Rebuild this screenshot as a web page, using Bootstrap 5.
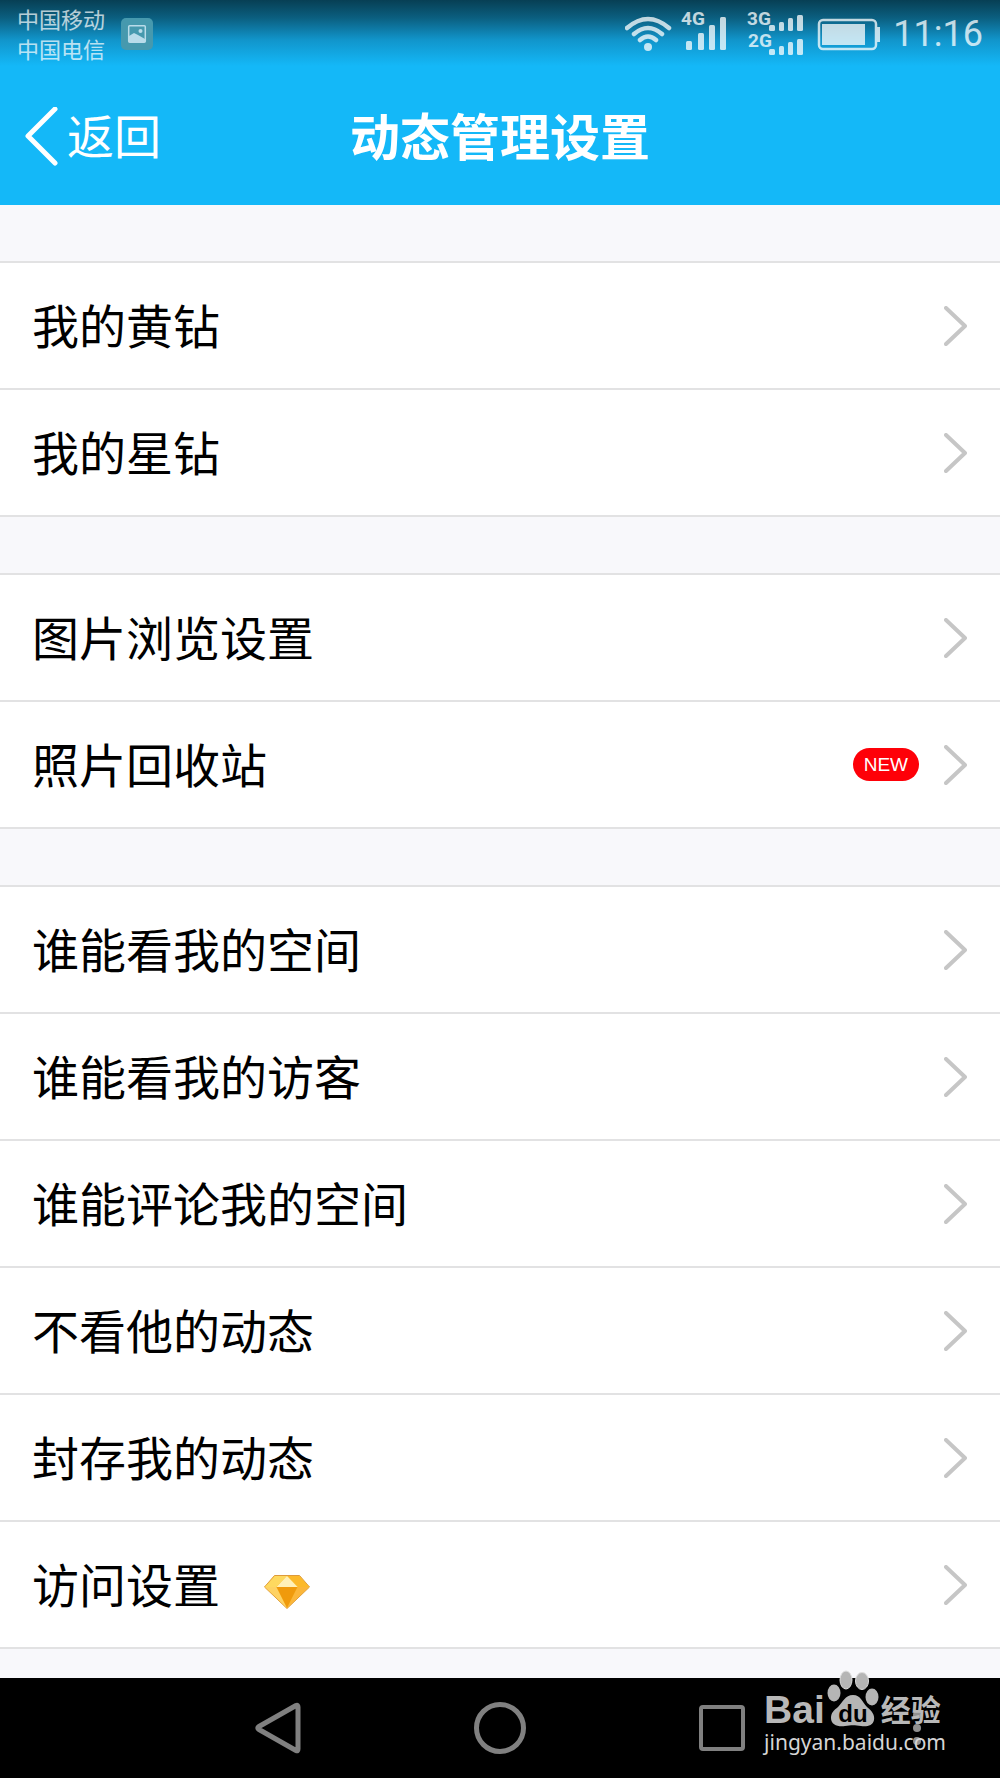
<!DOCTYPE html>
<html lang="zh-CN">
<head>
<meta charset="utf-8">
<meta name="viewport" content="width=device-width, initial-scale=1">
<title>动态管理设置</title>
<link href="https://cdn.jsdelivr.net/npm/bootstrap@5.3.0/dist/css/bootstrap.min.css" rel="stylesheet">
<style>
  body { font-family: "Noto Sans CJK SC", sans-serif; background: #f8f8fb; color: #000; }
  .app-head { background: linear-gradient(#073f54 0, #0b5f80 18px, #1195cb 40px, #14b8f8 66px); color: #fff; }
  .status-bar { height: 68px; padding: 0 17px; }
  .carriers { font-size: 22px; line-height: 30px; opacity: .7; padding-bottom: 2px; }
  .status-icons { opacity: .75; }
  .clock { font: 400 36px/68px Roboto, sans-serif; }
  .title-bar { height: 137px; padding-bottom: 6px; }
  .title-bar h1 { font-size: 50px; line-height: 60px; font-weight: 700; }
  .back-link { font-size: 47px; line-height: 60px; color: #fff; gap: 8px; }
  .back-link svg { margin-top: 6px; }
  .settings { gap: 56px; padding: 56px 0 28px; }
  .settings .list-group-item { height: 127px; padding: 0 33px 0 32px; border: 0 solid #e2e2e3; border-bottom-width: 2px; color: #000; font-size: 47px; line-height: 72px; }
  .settings .list-group-item:first-child { height: 129px; border-top-width: 2px; }
  .row-label { padding-bottom: 4px; }
  .gem { margin: 14px 0 0 44px; }
  .new-tag { background: #fe0008; font: 19px/33px "Liberation Sans", sans-serif; padding: 0 11px; margin-right: 25px; }
  .nav-keys { height: 100px; background: #000; display: grid; grid-template-columns: 1fr auto 1fr; }
  .nav-keys .keys { gap: 170px; }
  .nav-keys .more { margin-right: 70px; }
  .nav-keys button { line-height: 0; }
  .watermark { right: 54px; bottom: 22px; color: #b8b8b8; pointer-events: none; }
  .wm-latin { font: 700 39px/36px "Liberation Sans", sans-serif; }
  .wm-cjk { font-size: 30px; line-height: 40px; font-weight: 700; }
  .wm-url { font: 21px/28px "Noto Sans", sans-serif; color: #d5d5d5; }
</style>
</head>
<body class="d-flex flex-column min-vh-100">
<header class="app-head">
  <div class="status-bar d-flex align-items-center justify-content-between">
    <div class="d-flex align-items-center h-100">
      <div class="carriers">中国移动<br>中国电信</div>
      <svg class="ms-3" width="32" height="32" viewBox="0 0 32 32" aria-hidden="true"><rect width="32" height="32" rx="5" fill="#4699ae"/><rect x="7.700" y="7.700" width="16.600" height="16.600" rx="1" fill="none" stroke="#b9dcea" stroke-width="1.500"/><circle cx="19.500" cy="13" r="2" fill="#b9dcea"/><path d="M8 18l5-3 4 2 7 4v3H8z" fill="#b9dcea"/></svg>
    </div>
    <div class="status-icons d-flex align-items-center">
      <svg width="256" height="68" viewBox="626 0 256 68" fill="#fff" aria-label="WiFi 4G 3G 2G">
        <g fill="none" stroke="#fff" stroke-width="4.500" stroke-linecap="round"><path d="M628 28Q649 10 670 28M635 34Q649 22 663 34M641 40Q649 33 657 40"/></g><circle cx="649" cy="47" r="4"/>
        <g font-family="Roboto, sans-serif" font-weight="700" font-size="19"><text x="682" y="25">4G</text><text x="748" y="25">3G</text><text x="749" y="47">2G</text></g>
        <rect x="687" y="41" width="6" height="9" rx="1.500"/><rect x="699" y="33" width="6" height="17" rx="1.500"/><rect x="710" y="25" width="6" height="25" rx="1.500"/><rect x="721" y="17" width="6" height="33" rx="1.500"/>
        <rect x="770" y="25" width="6" height="6" rx="1.500"/><rect x="780" y="22" width="5" height="9" rx="1.500"/><rect x="789" y="18" width="5" height="13" rx="1.500"/><rect x="798" y="15" width="6" height="16" rx="1.500"/>
        <rect x="770" y="49" width="6" height="6" rx="1.500"/><rect x="780" y="46" width="5" height="9" rx="1.500"/><rect x="789" y="42" width="5" height="13" rx="1.500"/><rect x="798" y="39" width="6" height="16" rx="1.500"/>
        <rect x="820" y="20" width="57" height="29" rx="4" fill="none" stroke="#fff" stroke-width="2.500"/>
        <rect x="823" y="24" width="43" height="21"/>
        <path d="M878 27h3v15h-3z"/>
      </svg>
      <time class="clock ms-2 ps-1">11:16</time>
    </div>
  </div>
  <div class="title-bar position-relative d-flex align-items-center justify-content-center">
    <a href="#" class="back-link position-absolute start-0 ms-4 d-flex align-items-center text-decoration-none"><svg width="35" height="60" viewBox="0 0 35 60" fill="none" stroke="#fff" stroke-width="5" stroke-linecap="round" stroke-linejoin="round" aria-hidden="true"><path d="M31 2L4 29l27 27"/></svg>返回</a>
    <h1 class="m-0">动态管理设置</h1>
  </div>
</header>

<svg class="d-none" aria-hidden="true"><symbol id="chev" viewBox="0 0 23 40"><path d="M2 2l19 18L2 38" fill="none" stroke="#c6c6c6" stroke-width="4" stroke-linecap="round" stroke-linejoin="round"/></symbol></svg>

<main class="settings d-flex flex-column flex-grow-1">
  <div class="list-group rounded-0">
    <a href="#" class="list-group-item list-group-item-action d-flex align-items-center"><span class="row-label">我的黄钻</span><svg class="ms-auto" width="23" height="40"><use href="#chev"/></svg></a>
    <a href="#" class="list-group-item list-group-item-action d-flex align-items-center"><span class="row-label">我的星钻</span><svg class="ms-auto" width="23" height="40"><use href="#chev"/></svg></a>
  </div>
  <div class="list-group rounded-0">
    <a href="#" class="list-group-item list-group-item-action d-flex align-items-center"><span class="row-label">图片浏览设置</span><svg class="ms-auto" width="23" height="40"><use href="#chev"/></svg></a>
    <a href="#" class="list-group-item list-group-item-action d-flex align-items-center"><span class="row-label">照片回收站</span><span class="new-tag rounded-pill text-white ms-auto">NEW</span><svg width="23" height="40"><use href="#chev"/></svg></a>
  </div>
  <div class="list-group rounded-0">
    <a href="#" class="list-group-item list-group-item-action d-flex align-items-center"><span class="row-label">谁能看我的空间</span><svg class="ms-auto" width="23" height="40"><use href="#chev"/></svg></a>
    <a href="#" class="list-group-item list-group-item-action d-flex align-items-center"><span class="row-label">谁能看我的访客</span><svg class="ms-auto" width="23" height="40"><use href="#chev"/></svg></a>
    <a href="#" class="list-group-item list-group-item-action d-flex align-items-center"><span class="row-label">谁能评论我的空间</span><svg class="ms-auto" width="23" height="40"><use href="#chev"/></svg></a>
    <a href="#" class="list-group-item list-group-item-action d-flex align-items-center"><span class="row-label">不看他的动态</span><svg class="ms-auto" width="23" height="40"><use href="#chev"/></svg></a>
    <a href="#" class="list-group-item list-group-item-action d-flex align-items-center"><span class="row-label">封存我的动态</span><svg class="ms-auto" width="23" height="40"><use href="#chev"/></svg></a>
    <a href="#" class="list-group-item list-group-item-action d-flex align-items-center"><span class="row-label">访问设置</span>
      <svg class="gem" width="46" height="34" viewBox="0 0 46 34" aria-hidden="true"><path d="M10.500.5h25L45.500 12 23 33.500.5 12z" fill="#fdc63a" stroke="#dd9a3c" stroke-linejoin="round"/><path d="M11 1h12L12 12H1z" fill="#fed95f"/><path d="M23 1h12l10 11H34z" fill="#fcb92a"/><path d="M23 1L12.500 12h21z" fill="#fff0b8"/><path d="M1 12h11.500L23 33z" fill="#fed264"/><path d="M45 12H33.500L23 33z" fill="#fbb63a"/><path d="M12.500 12h21L23 33z" fill="#f09a0c"/></svg>
      <svg class="ms-auto" width="23" height="40"><use href="#chev"/></svg></a>
  </div>
</main>

<footer class="nav-keys position-relative align-items-center">
  <span></span>
  <div class="keys d-flex">
    <button class="btn p-0 border-0" aria-label="返回键"><svg width="52" height="52" viewBox="0 0 52 52" fill="none" stroke="#808080" stroke-width="5" stroke-linejoin="round"><path d="M44 3.500q2-1 2 1.500v42q0 2.500-2 1.500L7 27.500q-2.500-1.500 0-3z"/></svg></button>
    <button class="btn p-0 border-0" aria-label="主屏幕"><svg width="52" height="52" viewBox="0 0 52 52" fill="none" stroke="#808080" stroke-width="5"><circle cx="26" cy="26" r="23.500"/></svg></button>
    <button class="btn p-0 border-0" aria-label="最近任务"><svg width="52" height="52" viewBox="0 0 52 52" fill="none" stroke="#808080" stroke-width="4"><rect x="5" y="5" width="42" height="42" rx="2"/></svg></button>
  </div>
  <button class="more btn p-0 border-0 ms-auto" aria-label="更多"><svg width="26" height="40" viewBox="0 0 26 40" fill="#909090"><circle cx="13" cy="7" r="4"/><circle cx="13" cy="20" r="4"/><circle cx="13" cy="33" r="4"/></svg></button>
  <div class="watermark position-absolute">
    <div class="d-flex align-items-end">
      <span class="wm-latin">Bai</span>
      <svg width="56" height="58" viewBox="-1 0 56 58" fill="#b5b5b5" aria-hidden="true"><ellipse cx="8" cy="23" rx="6.500" ry="8.500"/><ellipse cx="20" cy="10" rx="6" ry="9" stroke="#ddd"/><ellipse cx="36" cy="11" rx="6.500" ry="8.500" stroke="#ddd"/><ellipse cx="46" cy="27" rx="6.500" ry="8.500"/><path d="M27 25c8 0 9 7 14 12 5 4 8 8 7 13-1 6-8 7-13 6-6-1-10-1-16 0-7 1-14-1-14-8 0-5 3-8 7-11 5-5 7-12 15-12z"/><text x="27" y="52" text-anchor="middle" font-family="Liberation Sans, sans-serif" font-weight="700" font-size="24" fill="#000">du</text></svg>
      <span class="wm-cjk">经验</span>
    </div>
    <div class="wm-url">jingyan.baidu.com</div>
  </div>
</footer>
<script src="https://cdn.jsdelivr.net/npm/bootstrap@5.3.0/dist/js/bootstrap.bundle.min.js"></script>
</body>
</html>
